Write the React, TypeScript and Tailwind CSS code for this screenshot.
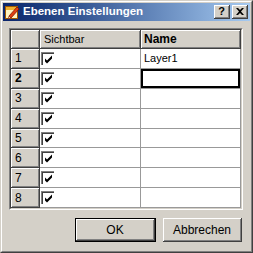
import React from 'react';

const rows = [1, 2, 3, 4, 5, 6, 7, 8];

// Klassischer Win2000-Rahmen für erhabene Flächen
const raised =
  'bg-[#D4D0C8] border-r border-b border-r-[#404040] border-b-[#404040] shadow-[inset_1px_1px_0_#ffffff,inset_-1px_-1px_0_#808080]';

function TitleIcon() {
  return (
    <svg width="16" height="16" viewBox="0 0 16 16">
      <rect x="1.5" y="2.5" width="12" height="12" fill="#fff4c0" stroke="#a05a00" />
      <rect x="2" y="3" width="11" height="3" fill="#f0b030" />
      <path d="M5 12 L13 3 L15 5 L7 14 Z" fill="#e04010" stroke="#801000" strokeWidth="0.8" />
      <path d="M5 12 L4 15 L7 14 Z" fill="#f8d8a0" stroke="#801000" strokeWidth="0.6" />
    </svg>
  );
}

function CaptionButton({ children }: { children: React.ReactNode }) {
  return (
    <div className={`w-[16px] h-[14px] flex items-center justify-center ${raised}`}>
      {children}
    </div>
  );
}

function CheckBox() {
  return (
    <div className="w-[13px] h-[13px] bg-white border-t border-l border-t-[#808080] border-l-[#808080] shadow-[inset_1px_1px_0_#404040] flex items-center justify-center">
      <svg width="9" height="9" viewBox="0 0 9 9">
        <path d="M1 3.5 L3 5.5 L8 0.5 L8 3.5 L3 8.5 L1 6.5 Z" fill="#000" />
      </svg>
    </div>
  );
}

export default function App() {
  return (
    <div className="w-[253px] h-[253px] bg-[#D4D0C8] border border-t-[#D4D0C8] border-l-[#D4D0C8] border-r-[#404040] border-b-[#404040] font-['Liberation_Sans',Arial,sans-serif] text-[11px] text-black select-none">
      <div className="h-full border border-t-white border-l-white border-r-[#808080] border-b-[#808080] p-px flex flex-col">
        {/* Titelleiste */}
        <div className="h-[18px] flex items-center bg-gradient-to-r from-[#0A246A] to-[#A6CAF0] pl-[1px] pr-[2px]">
          <TitleIcon />
          <span className="ml-[3px] text-white font-bold text-[11.5px] leading-none">Ebenen Einstellungen</span>
          <div className="ml-auto flex gap-[2px]">
            <CaptionButton>
              <span className="font-bold text-[11px] leading-none">?</span>
            </CaptionButton>
            <CaptionButton>
              <svg width="8" height="7" viewBox="0 0 8 7">
                <path d="M0 0 L2 0 L4 2 L6 0 L8 0 L5 3.5 L8 7 L6 7 L4 5 L2 7 L0 7 L3 3.5 Z" fill="#000" />
              </svg>
            </CaptionButton>
          </div>
        </div>

        {/* Tabelle */}
        <div className="mt-[7px] ml-[6px] w-[234px] h-[182px] border border-t-[#808080] border-l-[#808080] border-r-white border-b-white">
          <div className="h-full border border-t-[#404040] border-l-[#404040] border-r-[#D4D0C8] border-b-[#D4D0C8] bg-[#D4D0C8] flex flex-col">
            <div className="flex h-[19px]">
              <div className={`w-[29px] ${raised}`} />
              <div className={`w-[101px] flex items-center pl-[4px] ${raised}`}>Sichtbar</div>
              <div className={`w-[100px] flex items-center pl-[3px] font-bold text-[12px] ${raised}`}>Name</div>
            </div>
            {rows.map((n) => (
              <div key={n} className="flex h-[20px]">
                <div className={`w-[29px] flex items-center pl-[4px] text-[12px] ${n === 2 ? 'font-bold' : ''} ${raised}`}>
                  {n}
                </div>
                <div className="w-[101px] bg-white border-r border-b border-r-[#999] border-b-[#999] pl-[1px] pt-[3px]">
                  <CheckBox />
                </div>
                <div
                  className={`w-[100px] bg-white border-r border-b border-r-[#999] border-b-[#999] flex items-center pl-[3px] ${
                    n === 2 ? 'shadow-[inset_0_0_0_2px_#000]' : ''
                  }`}
                >
                  {n === 1 ? 'Layer1' : ''}
                </div>
              </div>
            ))}
          </div>
        </div>

        {/* Schaltflächen */}
        <div className="mt-[8px] flex justify-end gap-[7px] pr-[8px]">
          <div className="w-[81px] h-[24px] border border-black">
            <div className={`h-full flex items-center justify-center text-[12px] ${raised}`}>OK</div>
          </div>
          <div className={`w-[79px] h-[24px] flex items-center justify-center text-[12px] ${raised}`}>
            Abbrechen
          </div>
        </div>
      </div>
    </div>
  );
}
